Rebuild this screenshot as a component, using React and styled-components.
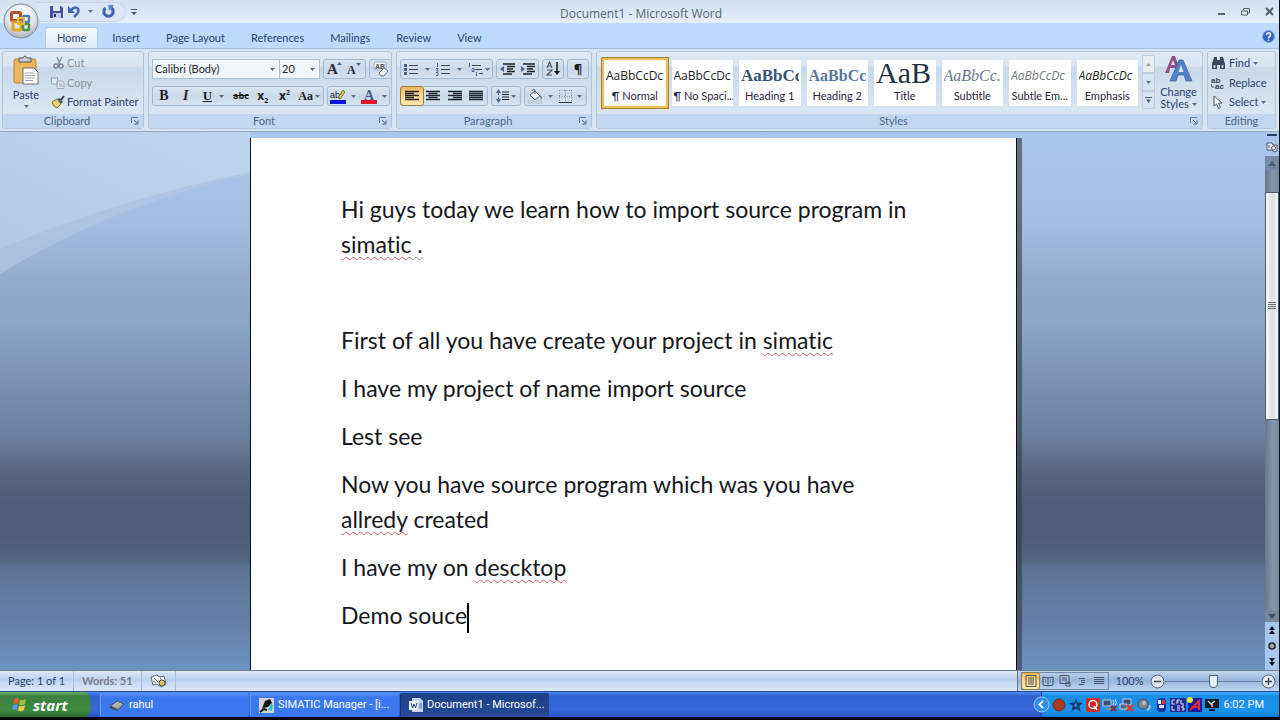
import React from "react";
import styled, { createGlobalStyle, css } from "styled-components";

const ui = `Lato, "Open Sans", sans-serif`;
const humanist = `"Open Sans", "Noto Sans", sans-serif`;
const xp = `Roboto, "Liberation Sans", sans-serif`;
const navy = "#2a4272";

const Global = createGlobalStyle`
  * { box-sizing: border-box; }
  body { margin: 0; background: #000; font: 11px/16px ${ui}; color: ${navy}; }
  button, select, input { font: inherit; color: inherit; margin: 0; padding: 0; border: 0; background: none; }
  svg { display: block; flex: none; overflow: visible; }
`;

const Window = styled.div`
  display: flex;
  flex-direction: column;
  min-height: 100vh;
  border-right: 1px solid #0b1016;
  border-bottom: 3px solid #000;
  position: relative;
`;

/* ---------- title bar ---------- */
const TitleBar = styled.header`
  display: flex;
  align-items: center;
  height: 23px;
  padding: 0 5px 0 36px;
  background: linear-gradient(#d3e1f2, #d9e6f6 50%, #e6f0fc);
`;
const QuickAccess = styled.div`
  display: flex;
  align-items: center;
  gap: 5px;
  height: 20px;
  width: 90px;
  padding-left: 14px;
  border: 1px solid #c4d5ea;
  border-left: 0;
  border-radius: 0 10px 10px 0;
  background: #dbe7f6;
`;
const Plain = styled.button`
  display: inline-flex;
  align-items: center;
  justify-content: center;
  gap: 3px;
`;
const MoreCommands = styled(Plain)`
  margin-left: 5px;
`;
const Caption = styled.h1`
  flex: 1;
  margin: 4px 0 0;
  padding-right: 72px;
  text-align: center;
  font: 400 12px/16px ${humanist};
  color: #5c6676;
`;
const WindowButtons = styled.div`
  display: flex;
  gap: 15px;
`;
const OfficeButton = styled.button`
  position: absolute;
  left: 3px;
  top: 3px;
  width: 36px;
  height: 36px;
`;

/* ---------- tabs ---------- */
const TabRow = styled.nav`
  display: flex;
  align-items: flex-end;
  height: 25px;
  padding: 0 4px 0 45px;
  background: #bfdaff;
`;
const Tab = styled.button`
  height: 21px;
  padding: 0 12px;
  margin-right: 2px;
  border-radius: 3px 3px 0 0;
  ${(p) => p.$active && css`
    background: linear-gradient(#f4f9ff, #dfeaf6);
    border: 1px solid #b3cdea;
    border-bottom: 0;
    padding: 0 11px;
  `}
`;
const Help = styled(Plain)`
  margin: 0 0 5px auto;
`;

/* ---------- ribbon ---------- */
const Ribbon = styled.section`
  display: flex;
  gap: 4px;
  height: 84px;
  padding: 2px 3px 2px 2px;
  background: #d7e4f2;
  border-top: 1px solid #9fbfdf;
  border-bottom: 1px solid #8fa9c2;
`;
const Group = styled.section`
  display: flex;
  flex-direction: column;
  width: ${(p) => p.$w || "auto"};
  flex: ${(p) => (p.$grow ? 1 : "none")};
  min-width: 0;
  border: 1px solid #aec6dd;
  border-radius: 3px;
  overflow: hidden;
  background: linear-gradient(#dee8f4 0, #dae5f1 14px, #c9d9ea 15px, #d9e6f3 60px);
`;
const GroupBody = styled.div`
  flex: 1;
  display: flex;
  min-height: 0;
`;
const GroupLabel = styled.footer`
  display: flex;
  align-items: center;
  justify-content: center;
  height: 14px;
  line-height: 14px;
  background: #c2d8f0;
  color: #4c6489;
  h2 { flex: 1; margin: 0; font: inherit; text-align: center; }
  button { margin-right: 4px; }
`;
const Rows = styled.div`
  display: flex;
  flex-direction: column;
  gap: 7px;
  padding: 7px 2px 0 3px;
`;
const Row = styled.div`
  display: flex;
  gap: 3px;
  height: 20px;
`;
const Cluster = styled.div`
  display: flex;
  width: ${(p) => p.$w};
  border: 1px solid #a3bad4;
  border-radius: 3px;
  background: linear-gradient(#d9e5f2, #cad9ea 50%, #d5e2f0);
`;
const Tool = styled.button`
  flex: ${(p) => p.$grow || 1};
  display: flex;
  align-items: center;
  justify-content: center;
  gap: 2px;
  color: #1d1d1f;
  ${(p) => p.$on && css`
    background: linear-gradient(#f6b55c, #ffd98a 50%, #ffe9a8);
    outline: 1px solid #9c7c46;
    border-radius: 2px;
  `}
`;
const Combo = styled.label`
  position: relative;
  width: ${(p) => p.$w};
  border: 1px solid #aebfd6;
  background: #f1f6fb;
  margin-right: ${(p) => (p.$join ? "-4px" : 0)};
  select {
    appearance: none;
    width: 100%;
    height: 18px;
    padding-left: 2px;
    color: #26262c;
  }
  svg { position: absolute; right: 4px; top: 8px; pointer-events: none; }
`;
const BigButton = styled.button`
  display: flex;
  flex-direction: column;
  align-items: center;
  width: ${(p) => p.$w};
  padding-top: 3px;
  line-height: 12px;
  svg + span { margin-top: 3px; }
  span + svg { margin-top: 4px; }
  em { font-style: normal; display: flex; align-items: center; gap: 3px; }
`;
const Stack = styled.div`
  display: flex;
  flex-direction: column;
  justify-content: space-between;
  padding: 2px 0 3px 3px;
`;
const LineButton = styled.button`
  display: flex;
  align-items: center;
  gap: 3px;
  height: 18px;
  white-space: nowrap;
  color: ${(p) => (p.$dim ? "#8b93a0" : navy)};
`;

/* ---------- style gallery ---------- */
const Gallery = styled.div`
  flex: 1;
  min-width: 0;
  display: flex;
  gap: 6px;
  padding: 8px 4px 8px 7px;
`;
const Tile = styled.button`
  flex: 1 1 0;
  min-width: 0;
  display: flex;
  flex-direction: column;
  padding: 0 2px;
  overflow: hidden;
  background: #fff;
  color: #2b2440;
  ${(p) => p.$on && css`
    outline: 2px solid #f0bd50;
    box-shadow: 0 0 0 3px #a38141;
  `}
`;
const Sample = styled.span`
  width: 100%;
  height: 28px;
  overflow: hidden;
  white-space: nowrap;
  text-align: left;
  font: ${(p) => p.$font};
  color: ${(p) => p.$color || "#1c1c1c"};
`;
const TileName = styled.span`
  width: 100%;
  line-height: 16px;
  white-space: nowrap;
  text-align: center;
`;
const GalleryScroll = styled.div`
  display: flex;
  flex-direction: column;
  width: 13px;
  margin: 3px 0 5px;
  button { flex: 1; border: 1px solid #bccfe4; background: #d5e3f3; }
  button:first-child { background: #e9ecf0; }
`;

/* ---------- document ---------- */
const Workspace = styled.main`
  flex: 1;
  display: flex;
  position: relative;
  background: linear-gradient(
    #a9c7ea 0, #a3bee2 90px, #93accd 150px, #8ba6c6 190px, #7b90b2 250px,
    #6b809e 305px, #566880 340px, #4b5d76 375px, #4c5e77 405px, #52667f 428px,
    #5d7395 438px, #6580a8 490px, #6c92c2 539px);
`;
const Swoosh = styled.svg`
  position: absolute;
  left: 0;
  top: 0;
`;
const Desk = styled.div`
  flex: 1;
  display: flex;
  justify-content: center;
  padding: 6px 0 0 2px;
  position: relative;
`;
const Page = styled.article`
  width: 767px;
  padding: 54px 90px 10px;
  background: #fff;
  border: solid #0a0f16;
  border-width: 0 1px;
  box-shadow: 5px 0 0 rgba(50, 56, 70, 0.6);
  font: 23px/35px Lato, "Open Sans", sans-serif;
  font-variant-ligatures: none;
  color: #15171c;
  p { margin: 0 0 13px; min-height: 35px; white-space: nowrap; }
  p:last-child { margin: 0; }
`;
const Flagged = styled.span`
  text-decoration: underline wavy ${(p) => p.$color || "#d0606a"} 1px;
  text-underline-offset: 3px;
  text-decoration-skip-ink: none;
`;
const TextCursor = styled.span`
  display: inline-block;
  width: 2px;
  height: 30px;
  background: #000;
  vertical-align: middle;
`;
const ScrollBar = styled.div`
  width: 14px;
  display: flex;
  flex-direction: column;
  align-items: stretch;
  background: #a9c6ec;
  position: relative;
`;
const ScrollButton = styled.button`
  height: ${(p) => p.$h};
  display: flex;
  align-items: center;
  justify-content: center;
  background: ${(p) => p.$bg || "none"};
`;
const Track = styled.div`
  flex: 1;
  display: flex;
  flex-direction: column;
  background: linear-gradient(90deg, #64788f, #8497ad 60%, #76899f);
`;
const Spacer = styled.div`
  flex: ${(p) => p.$n};
`;
const Thumb = styled.div`
  flex: 227;
  display: flex;
  align-items: center;
  justify-content: center;
  border: 1px solid #4f5b69;
  background: linear-gradient(90deg, #fafafa, #dcdfe2 50%, #f1f2f3);
`;

/* ---------- status bar ---------- */
const StatusBar = styled.footer`
  display: flex;
  height: 22px;
  line-height: 20px;
  border-top: 1px solid #6f7f92;
  border-bottom: 1px solid #2b4c8f;
  background: linear-gradient(#dde9f8, #b9d1ee 45%, #c3d9f4 55%, #dbe8f9);
`;
const StatusItem = styled.div`
  display: flex;
  align-items: center;
  padding: 0 8px;
  border-right: 1px solid #a5bddb;
  color: ${(p) => p.$color || navy};
  font-weight: ${(p) => (p.$bold ? 700 : 400)};
`;
const StatusRight = styled.div`
  margin-left: auto;
  display: flex;
  align-items: center;
  width: 262px;
  padding: 0 3px;
  border-left: 1px solid #5e7391;
  background: linear-gradient(#c3d6ee, #98b5db 45%, #9dbae0 55%, #c2d7f3);
`;
const Views = styled.div`
  display: flex;
  width: 88px;
  height: 18px;
  border: 1px solid #7089ad;
`;
const ZoomText = styled.button`
  width: 41px;
`;
const ZoomSlider = styled.input`
  appearance: none;
  flex: 1;
  min-width: 0;
  height: 16px;
  background: linear-gradient(#6c83a5, #6c83a5) center / 100% 1px no-repeat;
  &::-webkit-slider-thumb {
    appearance: none;
    width: 9px;
    height: 13px;
    border: 1px solid #4d607c;
    border-radius: 1px 1px 5px 5px;
    background: #e4ecf5;
  }
`;

/* ---------- taskbar ---------- */
const TaskBar = styled.footer`
  display: flex;
  height: 25px;
  background: linear-gradient(#4a8df3 0, #2f62d2 4px, #3767dc 70%, #2a55c4);
  font-family: ${xp};
  color: #fff;
`;
const Start = styled.button`
  display: flex;
  align-items: center;
  gap: 5px;
  width: 91px;
  margin-right: 9px;
  padding-left: 11px;
  border-radius: 0 8px 8px 0;
  background: linear-gradient(#6fae6c 0, #3b8040 4px, #3c8a3f 75%, #2c6a30);
  font: italic bold 15px/22px "Open Sans", sans-serif;
`;
const Task = styled.button`
  display: flex;
  align-items: center;
  gap: 4px;
  width: 149px;
  margin: 1px 1px 0 0;
  padding: 0 8px;
  border-radius: 2px;
  text-align: left;
  white-space: nowrap;
  background: ${(p) => (p.$on ? "linear-gradient(#1d3f85, #254b97)" : "linear-gradient(#5b95fa 0, #3b78f0 4px, #3a78f0)")};
  border-left: 1px solid ${(p) => (p.$on ? "#17336d" : "#6ea2fb")};
`;
const Tray = styled.div`
  margin-left: auto;
  width: 238px;
  display: flex;
  align-items: center;
  justify-content: space-between;
  padding-right: 15px;
  border-left: 1px solid #123f96;
  background: linear-gradient(#3fb0f8 0, #178ee6 4px, #1993ee 75%, #1277cc);
`;
const TrayIcons = styled.div`
  display: flex;
  align-items: center;
  gap: 1px;
  margin-left: -9px;
`;

/* ---------- drawings ---------- */
const Icon = ({ s = 16, w, h, vb, children }) => (
  <svg width={w || s} height={h || s} viewBox={vb || `0 0 ${w || s} ${h || s}`} aria-hidden="true">{children}</svg>
);
const Down = ({ c = "#5b6e8c" }) => <Icon w={5} h={3}><path d="M0 0h5L2.500 3z" fill={c} /></Icon>;
const Launcher = ({ name }) => (
  <Plain aria-label={name}>
    <Icon s={8}><path d="M.5 6V.5H7" fill="none" stroke="#6a7f9f" /><path d="M3 3l3 3M7 3.500V7H3.500" fill="none" stroke="#4f6484" /></Icon>
  </Plain>
);

const OfficeLogo = () => (
  <Icon s={36}>
    <defs>
      <radialGradient id="orb" cx=".5" cy=".3" r=".75"><stop offset="0" stopColor="#fff" /><stop offset=".6" stopColor="#dfe3ea" /><stop offset="1" stopColor="#9da7b5" /></radialGradient>
    </defs>
    <circle cx="18" cy="18" r="17" fill="url(#orb)" stroke="#7c8796" />
    <g fill="none" strokeWidth="3">
      <rect x="8.500" y="9.500" width="9" height="8" rx="1" stroke="#b5532a" />
      <rect x="20" y="13" width="6" height="6" rx="1" stroke="#4f7fb8" strokeWidth="2.500" />
      <rect x="10" y="19" width="8" height="8" rx="1" stroke="#e3a52c" />
      <rect x="20" y="21" width="6" height="6" rx="1" stroke="#4f9440" strokeWidth="2.500" />
      <path d="M15 15h6v6h-6z" stroke="#e8b93f" strokeWidth="2" />
    </g>
  </Icon>
);
const Save = () => (
  <Icon s={13}><path d="M0 1h11l2 2v10H0z" fill="#4a4f9c" /><path d="M3 1h7v5H3z" fill="#dfe6f5" /><path d="M3 8h8v5H3z" fill="#c4cbe2" /><path d="M4 9h2v3H4z" fill="#30356f" /></Icon>
);
const Undo = () => <Icon w={12} h={13}><path d="M3 5C8 0 13 4 9 9L6 12" fill="none" stroke="#4468b0" strokeWidth="2.500" /><path d="M0 1v7h7z" fill="#4468b0" /></Icon>;
const Redo = () => <Icon s={13}><path d="M3.500 3a4.700 4.700 0 1 0 6 0" fill="none" stroke="#3f63ad" strokeWidth="3" /><path d="M6 0h6L7 6z" fill="#5f86c8" /></Icon>;
const HelpIcon = () => (
  <Icon s={13}><circle cx="6.500" cy="6.500" r="6" fill="#3463bf" stroke="#8fa9d6" /><path d="M4.500 5a2 2 0 1 1 3 1.600q-1 .6-1 1.600M6.500 9.500v1.300" fill="none" stroke="#fff" strokeWidth="1.500" /></Icon>
);
const PasteIcon = () => (
  <Icon w={28} h={31}>
    <rect x="2" y="4" width="22" height="24" rx="2" fill="#ecb65c" stroke="#b9853a" />
    <path d="M7 7V3h4q2-4 4 0h4v4z" fill="#c9ccd1" stroke="#50545c" />
    <path d="M11 13h11l4 4v12H11z" fill="#fff" stroke="#6a7078" />
    <path d="M13 18h9M13 20.500h10M13 23h10M13 25.500h8" stroke="#9aa4b5" />
  </Icon>
);
const Cut = () => <Icon w={12} h={12}><path d="M5 0l3 7M10 0L6 7" stroke="#8993a2" strokeWidth="1.500" /><circle cx="4" cy="9" r="2" fill="none" stroke="#7a8494" strokeWidth="1.500" /><circle cx="9" cy="9" r="2" fill="none" stroke="#7a8494" strokeWidth="1.500" /></Icon>;
const Copy = () => <Icon w={12} h={12}><path d="M-.5 1h6v6h-6zM5 4h5l2 2v5.500H5z" fill="#e4e9f0" stroke="#99a3b2" /><path d="M7 7h3M7 9h4" stroke="#99a3b2" /></Icon>;
const Painter = () => <Icon w={12} h={13}><path d="M0 6l5-3 4 5-4 4q-4-1-5-6z" fill="#e8cf6a" stroke="#8f7a35" /><path d="M5 3l3-1 3 4-2 2z" fill="#4a6076" /><path d="M9 4l3-4" stroke="#2f4460" strokeWidth="2" /></Icon>;

const Lines = ({ widths, a = "start", c = "#20242c" }) => (
  <Icon w={14} h={12}>
    {widths.map((n, i) => (
      <path key={i} d={`M${a === "end" ? 14 - n : a === "mid" ? (14 - n) / 2 : 0} ${i * 2 + 1.5}h${n}`} stroke={c} strokeWidth="1.300" />
    ))}
  </Icon>
);
const Bullets = () => <Icon w={14} h={13}><path d="M5 2.500h9M5 6.500h9M5 10.500h9" stroke="#3d434d" strokeWidth="1.200" /><path d="M0 1h3v3H0zM0 5h3v3H0zM0 9h3v3H0z" fill="#476090" /></Icon>;
const Numbers = () => <Icon w={14} h={13}><path d="M5 2.500h9M5 6.500h9M5 10.500h9" stroke="#3d434d" strokeWidth="1.200" /><path d="M1.500 0v4M0 5.500h2L.5 8h2M0 9.500h2v3H0" fill="none" stroke="#476090" /></Icon>;
const Multi = () => <Icon w={15} h={13}><path d="M4 2.500h9M7 6.500h7M11 10.500h4" stroke="#3d434d" strokeWidth="1.200" /><path d="M1.500 0v4M4 5.500h2v3H4v-2M8.500 9v4" fill="none" stroke="#476090" /></Icon>;
const Indent = ({ out }) => (
  <Icon w={15} h={12}>
    <path d="M3 1h12M7 3.500h8M7 6h6M7 8.500h8M3 11h9" stroke="#20242c" strokeWidth="1.500" />
    <path d={out ? "M0 6l4-3v6z" : "M5 6L1 3v6z"} fill="#476090" />
  </Icon>
);
const Sort = () => <Icon w={15} h={14}><path d="M1 6l2.500-6L6 6M2 4h3M1 8h5l-5 5h5" fill="none" stroke="#4f5664" strokeWidth="1.200" /><path d="M11 0v11" stroke="#15171c" strokeWidth="1.500" /><path d="M8 9h6l-3 4z" fill="#15171c" /></Icon>;
const Spacing = () => <Icon w={13} h={14}><path d="M6 3h7M6 5.500h7M6 8h7M6 10.500h7" stroke="#20242c" /><path d="M2.500 3v8" stroke="#476090" strokeDasharray="3 2" /><path d="M0 4l2.500-4L5 4zM0 10l2.500 4L5 10z" fill="#476090" /></Icon>;
const Bucket = () => <Icon w={15} h={14}><path d="M2 6l5-4 5 5-5 4z" fill="#f2f4f7" stroke="#5c6573" /><path d="M7 5V1q-2-2-3 1" fill="none" stroke="#5c6573" /><path d="M12 6q3 2 1 5z" fill="#5c6573" /><path d="M0 12h14v2H0z" fill="#dfe6ee" stroke="#8894a5" strokeWidth=".5" /></Icon>;
const Borders = () => <Icon s={13}><path d="M.5 0v13M6.500 0v13M12.500 0v13M0 .5h13M0 6.500h13" stroke="#7d8899" strokeDasharray="1 1.500" /><path d="M0 12.500h13" stroke="#2b313b" /></Icon>;
const Grow = ({ down }) => (
  <Icon w={15} h={14}>
    <text x="0" y="12" fontFamily="Liberation Serif, serif" fontWeight="700" fontSize={down ? 12 : 15} fill="#2a2e36">A</text>
    <path d={down ? "M9 1h5l-2.500 3z" : "M10 3h5l-2.500-3z"} fill="#476090" />
  </Icon>
);
const ClearFormat = () => (
  <Icon s={16}>
    <rect x="1" y="1" width="12" height="8" rx="1" fill="#eef2f7" stroke="#8b97a8" strokeWidth=".7" />
    <text x="2" y="8" fontFamily="Liberation Sans, sans-serif" fontSize="7" fontWeight="700" fill="#4b4f58">AB</text>
    <path d="M6 12l5-5 4 3-4 5H8z" fill="#f3f4f6" stroke="#6b7482" />
  </Icon>
);
const Highlight = () => (
  <Icon w={16} h={15}>
    <text x="0" y="9" fontFamily="Liberation Sans, sans-serif" fontSize="9" fill="#20242c">ab</text>
    <path d="M8 9l5-8 2 2-5 7z" fill="#d9c24e" stroke="#59522c" strokeWidth=".7" /><path d="M0 11h16v4H0z" fill="#0b16d8" />
  </Icon>
);
const FontColor = () => (
  <Icon w={16} h={15}>
    <text x="3" y="11" fontFamily="Liberation Serif, serif" fontWeight="700" fontSize="14" fill="#4a5f86">A</text>
    <path d="M0 11h16v4H0z" fill="#e0182a" />
  </Icon>
);
const TwoAs = () => (
  <Icon w={30} h={28}>
    <path d="M1 18L8 1h3l6 17h-4l-2-5H6l-1 5z" fill="#8d4f86" /><path d="M7 10h4l-2-5z" fill="#dbe6f2" />
    <path d="M6 26L15 5h4l9 21h-6l-2-6h-6l-2 6z" fill="#4f83c6" stroke="#365f98" strokeWidth=".7" /><path d="M14.500 17h5L17 10z" fill="#e3ecf6" />
  </Icon>
);
const Find = () => <Icon w={15} h={12}><path d="M3 0h3v3h3V0h3l2 7v5H9V8H6v4H1V7z" fill="#39465c" /><path d="M2.500 8h2v3h-2zM10.500 8h2v3h-2z" fill="#b9c8de" /></Icon>;
const Replace = () => (
  <Icon w={15} h={14}>
    <text x="0" y="7" fontFamily="Liberation Sans, sans-serif" fontWeight="700" fontSize="8" fill="#39404c">ab</text>
    <text x="4" y="13" fontFamily="Liberation Sans, sans-serif" fontWeight="700" fontSize="8" fill="#39404c">ac</text>
    <path d="M.5 8v3h3" fill="none" stroke="#476090" />
  </Icon>
);
const Pointer = () => <Icon w={15} h={13}><path d="M3 0v10l2.500-2 2 4.500 2-1L7.500 7H11z" fill="#fff" stroke="#4e5868" /></Icon>;
const Proof = () => <Icon w={17} h={14}><path d="M1 3l6-2 3 2 4-1 2 8-5 3-4-3-4 1z" fill="#f5f6f8" stroke="#5f6b7c" /><path d="M4 4l4 4M3 7l3 2M10 4l3 5" stroke="#6b7688" /><circle cx="12" cy="9" r="3" fill="#e1c05a" stroke="#51596a" /></Icon>;
const Ruler = () => <Icon s={12}><path d="M1 2h5l1 2h4v6l-3 1-2-2H1z" fill="#f0f4f9" stroke="#46566b" /><circle cx="7.500" cy="7" r="2" fill="none" stroke="#46566b" /><path d="M3 4v3" stroke="#46566b" /></Icon>;
const Chevrons = ({ up }) => <Icon w={6} h={8}><path d={up ? "M0 4l3-4 3 4zM0 8l3-4 3 4z" : "M0 0h6L3 4zM0 4h6L3 8z"} fill="#0c1320" /></Icon>;
const ZoomMark = ({ plus }) => <Icon s={15}><circle cx="7.500" cy="7.500" r="6.500" fill="#e6edf6" stroke="#55657d" /><path d={plus ? "M4 7.500h7M7.500 4v7" : "M4 7.500h7"} stroke="#35445c" strokeWidth="1.500" /></Icon>;
const Flag = () => (
  <Icon w={17} h={17}>
    <path d="M3 3q3-2 5 0L7 8q-3-1.500-5 0z" fill="#e5602f" /><path d="M9 4q3 1 6-1l-1 5q-3 2-6 .5z" fill="#93c83e" />
    <path d="M2 9q3-1.500 5 0l-1 5q-3-1.500-5 0z" fill="#5b93ea" /><path d="M8 10q3 1 6-1l-1 5q-3 2-6 .5z" fill="#f5cc3e" />
  </Icon>
);

const views = [
  ["Print Layout", "M1 .5h10v11H1zM3 3h6M3 5h6M3 7h6M3 9h6"],
  ["Full Screen Reading", "M1 2l5 1 5-1v8l-5 1-5-1zM6 3v8M3 5h1M8 5h1M3 7h1M8 7h1"],
  ["Web Layout", "M1 .5h9v8H1zM3 3h5M3 5h5M7 7h4v4H7z"],
  ["Outline", "M3 3.500h6M5 5.500h4M5 7.500h4M3 9.500h5"],
  ["Draft", "M1 2.500h10M1 4.500h10M1 6.500h10M1 8.500h10"],
];

const tabs = ["Home", "Insert", "Page Layout", "References", "Mailings", "Review", "View"];

const serif = `"Liberation Serif", serif`;
const styles = [
  ["¶ Normal", "AaBbCcDc", `12px/32px ${humanist}`],
  ["¶ No Spaci...", "AaBbCcDc", `12px/32px ${humanist}`],
  ["Heading 1", "AaBbCc", `bold 17px/32px ${serif}`, "#3b5273"],
  ["Heading 2", "AaBbCc", `bold 16px/32px ${serif}`, "#56789f"],
  ["Title", "AaB", `30px/26px ${serif}`, "#23303f"],
  ["Subtitle", "AaBbCc.", `italic 16px/32px ${serif}`, "#66788e"],
  ["Subtle Em...", "AaBbCcDc", `italic 12px/32px ${humanist}`, "#75797f"],
  ["Emphasis", "AaBbCcDc", `italic 12px/32px ${humanist}`],
];

const GroupBox = ({ label, w, grow, launcher, children }) => (
  <Group $w={w} $grow={grow} aria-label={label}>
    <GroupBody>{children}</GroupBody>
    <GroupLabel><h2>{label}</h2>{launcher && <Launcher name={`${label} options`} />}</GroupLabel>
  </Group>
);

const Letter = styled.span`
  font: ${(p) => p.$font};
  text-decoration: ${(p) => p.$deco || "none"};
  sub, sup { font-size: 7px; line-height: 0; }
`;

function RibbonBar() {
  return (
    <Ribbon>
      <GroupBox label="Clipboard" w="142px" launcher>
        <BigButton $w="46px"><PasteIcon /><span>Paste</span><Down /></BigButton>
        <Stack>
          <LineButton $dim><Cut />Cut</LineButton>
          <LineButton $dim><Copy />Copy</LineButton>
          <LineButton><Painter />Format Painter</LineButton>
        </Stack>
      </GroupBox>

      <GroupBox label="Font" w="244px" launcher>
        <Rows>
          <Row>
            <Combo $w="128px" $join><select aria-label="Font"><option>Calibri (Body)</option></select><Down /></Combo>
            <Combo $w="41px"><select aria-label="Font size"><option>20</option></select><Down /></Combo>
            <Cluster $w="43px"><Tool aria-label="Grow font"><Grow /></Tool><Tool aria-label="Shrink font"><Grow down /></Tool></Cluster>
            <Cluster $w="23px"><Tool aria-label="Clear formatting"><ClearFormat /></Tool></Cluster>
          </Row>
          <Row>
            <Cluster $w="172px">
              <Tool $grow={22}><Letter $font={`bold 14px/16px ${serif}`}>B</Letter></Tool>
              <Tool $grow={22}><Letter $font={`italic bold 14px/16px ${serif}`}>I</Letter></Tool>
              <Tool $grow={34}><Letter $deco="underline" $font={`bold 13px/16px ${serif}`}>U</Letter>&nbsp;<Down /></Tool>
              <Tool $grow={22}><Letter $deco="line-through" $font={`bold 9px/16px ${humanist}`}>abc</Letter></Tool>
              <Tool $grow={22}><Letter $font={`bold 12px/16px ${humanist}`}>x<sub>2</sub></Letter></Tool>
              <Tool $grow={22}><Letter $font={`bold 12px/16px ${humanist}`}>x<sup>2</sup></Letter></Tool>
              <Tool $grow={28}><Letter $font={`bold 12px/16px ${serif}`}>Aa</Letter><Down /></Tool>
            </Cluster>
            <Cluster $w="63px">
              <Tool aria-label="Highlight"><Highlight /><Icon w={1} h={1} /><Down /></Tool>
              <Tool aria-label="Font colour"><FontColor /><Icon w={1} h={1} /><Down /></Tool>
            </Cluster>
          </Row>
        </Rows>
      </GroupBox>

      <GroupBox label="Paragraph" w="196px" launcher>
        <Rows>
          <Row>
            <Cluster $w="93px">
              <Tool aria-label="Bullets" $grow={32}><Bullets /><Icon w={3} h={1} /><Down /></Tool>
              <Tool aria-label="Numbering" $grow={32}><Numbers /><Icon w={3} h={1} /><Down /></Tool>
              <Tool aria-label="Multilevel list" $grow={27}><Multi /><Down /></Tool>
            </Cluster>
            <Cluster $w="43px"><Tool aria-label="Decrease indent"><Indent out /></Tool><Tool aria-label="Increase indent"><Indent /></Tool></Cluster>
            <Cluster $w="22px"><Tool aria-label="Sort"><Sort /></Tool></Cluster>
            <Cluster $w="22px"><Tool><Letter $font={`bold 13px/16px ${humanist}`}>¶</Letter></Tool></Cluster>
          </Row>
          <Row>
            <Cluster $w="88px">
              <Tool $on aria-label="Align left"><Lines widths={[14, 9, 14, 9, 14]} /></Tool>
              <Tool aria-label="Centre"><Lines a="mid" widths={[14, 9, 14, 9, 14]} /></Tool>
              <Tool aria-label="Align right"><Lines a="end" widths={[14, 9, 14, 9, 14]} /></Tool>
              <Tool aria-label="Justify"><Lines widths={[14, 14, 14, 14, 14]} /></Tool>
            </Cluster>
            <Cluster $w="30px"><Tool aria-label="Line spacing"><Spacing /><Down /></Tool></Cluster>
            <Cluster $w="63px">
              <Tool aria-label="Shading"><Bucket /><Icon w={1} h={1} /><Down /></Tool>
              <Tool aria-label="Borders"><Borders /><Icon w={1} h={1} /><Down /></Tool>
            </Cluster>
          </Row>
        </Rows>
      </GroupBox>

      <GroupBox label="Styles" grow launcher>
        <Gallery>
          {styles.map(([name, sample, font, color], i) => (
            <Tile key={name} $on={i === 0}>
              <Sample $font={font} $color={color}>{sample}</Sample>
              <TileName>{name}</TileName>
            </Tile>
          ))}
        </Gallery>
        <GalleryScroll>
          <Plain aria-label="Previous styles"><Icon w={5} h={3}><path d="M0 3h5L2.500 0z" fill="#a9a29c" /></Icon></Plain>
          <Plain aria-label="Next styles"><Down /></Plain>
          <Plain aria-label="More styles"><Icon w={7} h={6}><path d="M0 .5h7" stroke="#4f6484" /><path d="M1 2.500h5L3.500 6z" fill="#4f6484" /></Icon></Plain>
        </GalleryScroll>
        <BigButton $w="47px"><TwoAs /><span>Change</span><em>Styles <Down /></em></BigButton>
      </GroupBox>

      <GroupBox label="Editing" w="69px">
        <Stack>
          <LineButton><Find />Find <Down /></LineButton>
          <LineButton><Replace />Replace</LineButton>
          <LineButton><Pointer />Select <Down /></LineButton>
        </Stack>
      </GroupBox>
    </Ribbon>
  );
}

function Document() {
  return (
    <Workspace>
      <Swoosh width="250" height="154" viewBox="0 0 250 154" aria-hidden="true">
        <defs>
          <linearGradient id="sheen" x1="0" y1="1" x2="1" y2="0"><stop offset="0" stopColor="#b3c8e4" /><stop offset="1" stopColor="#bfd5ee" /></linearGradient>
        </defs>
        <path d="M0 0H250V42Q110 74 0 142z" fill="#b4c8e2" opacity=".65" />
        <path d="M0 0H250V40Q120 66 0 117z" fill="url(#sheen)" />
      </Swoosh>
      <Desk>
        <Page>
          <p>Hi guys today we learn how to import source program in<br /><Flagged>simatic</Flagged><Flagged $color="#6b9a7c"> .</Flagged></p>
          <p />
          <p>First of all you have create your project in <Flagged>simatic</Flagged></p>
          <p>I have my project of name import source</p>
          <p>Lest see</p>
          <p>Now you have source program which was you have<br /><Flagged>allredy</Flagged> created</p>
          <p>I have my on <Flagged>descktop</Flagged></p>
          <p>Demo souce<TextCursor /></p>
        </Page>
      </Desk>
      <ScrollBar>
        <ScrollButton $h="6px" aria-label="Split"><Icon w={10} h={3}><path d="M0 0h10v2H0z" fill="#2b3f63" /></Icon></ScrollButton>
        <ScrollButton $h="18px" aria-label="View ruler"><Ruler /></ScrollButton>
        <ScrollButton $h="14px" $bg="#748aa6" aria-label="Scroll up"><Icon w={8} h={5}><path d="M0 5h8L4 0z" fill="#46586f" /></Icon></ScrollButton>
        <Track>
          <Spacer $n={22} />
          <Thumb><Icon w={8} h={8}><path d="M0 .5h8M0 2.500h8M0 4.500h8M0 6.500h8" stroke="#6a6f76" /></Icon></Thumb>
          <Spacer $n={190} />
        </Track>
        <ScrollButton $h="12px" $bg="#74879d" aria-label="Scroll down"><Icon w={8} h={5}><path d="M0 0h8L4 5z" fill="#40505f" /></Icon></ScrollButton>
        <ScrollButton $h="16px" aria-label="Previous page"><Chevrons up /></ScrollButton>
        <ScrollButton $h="16px" aria-label="Browse object"><Icon s={8}><circle cx="4" cy="4" r="3" fill="#9fae9c" stroke="#1c2632" strokeWidth="1.500" /></Icon></ScrollButton>
        <ScrollButton $h="16px" aria-label="Next page"><Chevrons /></ScrollButton>
      </ScrollBar>
    </Workspace>
  );
}

function Status() {
  return (
    <StatusBar>
      <StatusItem>Page: 1 of 1</StatusItem>
      <StatusItem $color="#7c8087" $bold>Words: 51</StatusItem>
      <StatusItem><Proof /></StatusItem>
      <StatusRight>
        <Views>
          {views.map(([name, d], i) => (
            <Tool key={name} $on={i === 0} aria-label={name}><Icon s={12}><path d={d} fill="none" stroke="#4a5566" /></Icon></Tool>
          ))}
        </Views>
        <ZoomText>100%</ZoomText>
        <Plain aria-label="Zoom out"><ZoomMark /></Plain>
        <ZoomSlider type="range" aria-label="Zoom" defaultValue="50" />
        <Plain aria-label="Zoom in"><ZoomMark plus /></Plain>
      </StatusRight>
    </StatusBar>
  );
}

function Tasks() {
  return (
    <TaskBar>
      <Start><Flag />start</Start>
      <Task>
        <Icon w={16} h={14}><path d="M1 8l7-5 7 3-6 6z" fill="#9a9fa6" stroke="#4a4f57" /><path d="M1 8l8 4v1L1 10z" fill="#3e434a" /><path d="M4 8l6-4M6 9l6-4" stroke="#c9ccd0" /></Icon>
        rahul
      </Task>
      <Task>
        <Icon s={15}><path d="M0 0h15v15H0z" fill="#cfd3d8" /><path d="M2 13L6 3l5-2 2 4-4 4-5 1z" fill="#111" /><path d="M9 12l3-6 2 1-1 6z" fill="#27c5c9" /><path d="M1 14l4-3 3 1" fill="none" stroke="#111" strokeWidth="2" /></Icon>
        SIMATIC Manager - [i...
      </Task>
      <Task $on>
        <Icon s={14}><path d="M3 0h8l3 3v11H3z" fill="#c6d6ef" /><path d="M0 3h9v9H0z" fill="#eef3fb" /><path d="M2 5l1.500 5L5 6l1.500 4L8 5" fill="none" stroke="#27498f" /><path d="M10 6h3M10 8h3M10 10h3" stroke="#5374b4" /></Icon>
        Document1 - Microsof...
      </Task>
      <Tray>
        <TrayIcons>
          <Plain aria-label="Show hidden icons"><Icon s={17}><circle cx="8.500" cy="8.500" r="7.500" fill="#2f8fee" stroke="#9fd0fb" /><path d="M10 5L6.500 8.500 10 12" fill="none" stroke="#fff" strokeWidth="2" /></Icon></Plain>
          <Icon s={16}><circle cx="8" cy="8" r="6" fill="#a63a22" stroke="#6d2a1e" /></Icon>
          <Icon s={16}><path d="M8 1l1.500 4.500L15 6l-4 3 2 6-5-3.500L3 15l2-6-4-3 5.500-.5z" fill="#123a6d" /><path d="M8 5l1 3-1 2-2-1z" fill="#3f9be8" /></Icon>
          <Icon s={16}><rect x="1" y="1" width="14" height="14" rx="2" fill="#d0281e" /><circle cx="8" cy="7.500" r="4" fill="none" stroke="#fff" strokeWidth="1.500" /><path d="M9 9l3 4" stroke="#fff" strokeWidth="1.500" /></Icon>
          <Icon s={16}><path d="M1 3h8v6H1z" fill="#3b4f7a" stroke="#c5cedc" /><path d="M4 11h5v2H4z" fill="#8b93a5" /><path d="M11 3q2 2 0 5M13 2q3 3 0 7" fill="none" stroke="#d7e6f6" /><path d="M9 9l5 5M14 9l-5 5" stroke="#8c2540" strokeWidth="2" /></Icon>
          <Icon s={16}><path d="M4 2h8v6H4z" fill="#3b4f7a" stroke="#c5cedc" /><path d="M1 7h7v5H1z" fill="#56658a" stroke="#c5cedc" /><path d="M8 8l6 6M14 8l-6 6" stroke="#cf4034" strokeWidth="2.500" /></Icon>
          <Icon s={16}><circle cx="7" cy="7" r="5" fill="#7e858e" stroke="#4b535e" /><circle cx="8" cy="6" r="2" fill="#b9bfc6" /><path d="M11 13q3-1 3-5" fill="none" stroke="#c3ccd6" strokeWidth="1.500" /></Icon>
          <Icon s={16}><rect x="4" y="1" width="9" height="14" rx="4" fill="#1b2fa0" /><path d="M5 3h3v4H5z" fill="#e9edf8" /><path d="M9 3h3v4H9z" fill="#d63b34" /><path d="M6 8h5v3H6z" fill="#dfe6fb" /></Icon>
          <Icon s={16}><path d="M0 1h16v14H0z" fill="#1c2d8f" /><path d="M5 3H2v4h3M7 7V3h3M7 5h2M11 3v4h3M2 9v4h3M7 9h3M7 11h3M7 13h3M14 9h-2v2h2v2h-2" fill="none" stroke="#e3dcf5" /></Icon>
          <Icon s={16}><path d="M1 1h14v14H1z" fill="#1a1d9c" /><circle cx="3" cy="3" r="3" fill="#f4e33a" /><path d="M3 13l9-9v9M6 10h6" fill="none" stroke="#e02a3c" strokeWidth="2" /></Icon>
          <Icon s={16}><path d="M1 2h14v9H1zM5 12h6v2H5z" fill="#101820" /><path d="M4 4l3 3 4-3M8 7v3" fill="none" stroke="#cfd8e2" strokeWidth="1.500" /></Icon>
        </TrayIcons>
        <time>6:02 PM</time>
      </Tray>
    </TaskBar>
  );
}

export default function App() {
  return (
    <Window>
      <Global />
      <TitleBar>
        <QuickAccess>
          <Plain aria-label="Save"><Save /></Plain>
          <Plain aria-label="Undo"><Undo /><Icon w={2} h={1} /><Down /></Plain>
          <Plain aria-label="Repeat"><Icon w={1} h={1} /><Redo /></Plain>
        </QuickAccess>
        <MoreCommands aria-label="Customize Quick Access Toolbar"><Icon w={6} h={6}><path d="M0 .5h6" stroke="#44546c" /><path d="M0 3h6L3 6z" fill="#44546c" /></Icon></MoreCommands>
        <Caption>Document1 - Microsoft Word</Caption>
        <WindowButtons>
          <Plain aria-label="Minimize"><Icon s={9}><path d="M1 7h7" stroke="#5b6068" strokeWidth="2" /></Icon></Plain>
          <Plain aria-label="Restore"><Icon s={9}><path d="M2.500 3V1.500h6V6H7M.5 4h6v4h-6z" fill="none" stroke="#5b6068" /></Icon></Plain>
          <Plain aria-label="Close"><Icon s={9}><path d="M1 1l7 7M8 1L1 8" stroke="#5b6068" strokeWidth="2" /></Icon></Plain>
        </WindowButtons>
      </TitleBar>
      <TabRow>
        {tabs.map((t, i) => <Tab key={t} $active={i === 0}>{t}</Tab>)}
        <Help aria-label="Help"><HelpIcon /></Help>
      </TabRow>
      <OfficeButton aria-label="Office Button"><OfficeLogo /></OfficeButton>
      <RibbonBar />
      <Document />
      <Status />
      <Tasks />
    </Window>
  );
}
